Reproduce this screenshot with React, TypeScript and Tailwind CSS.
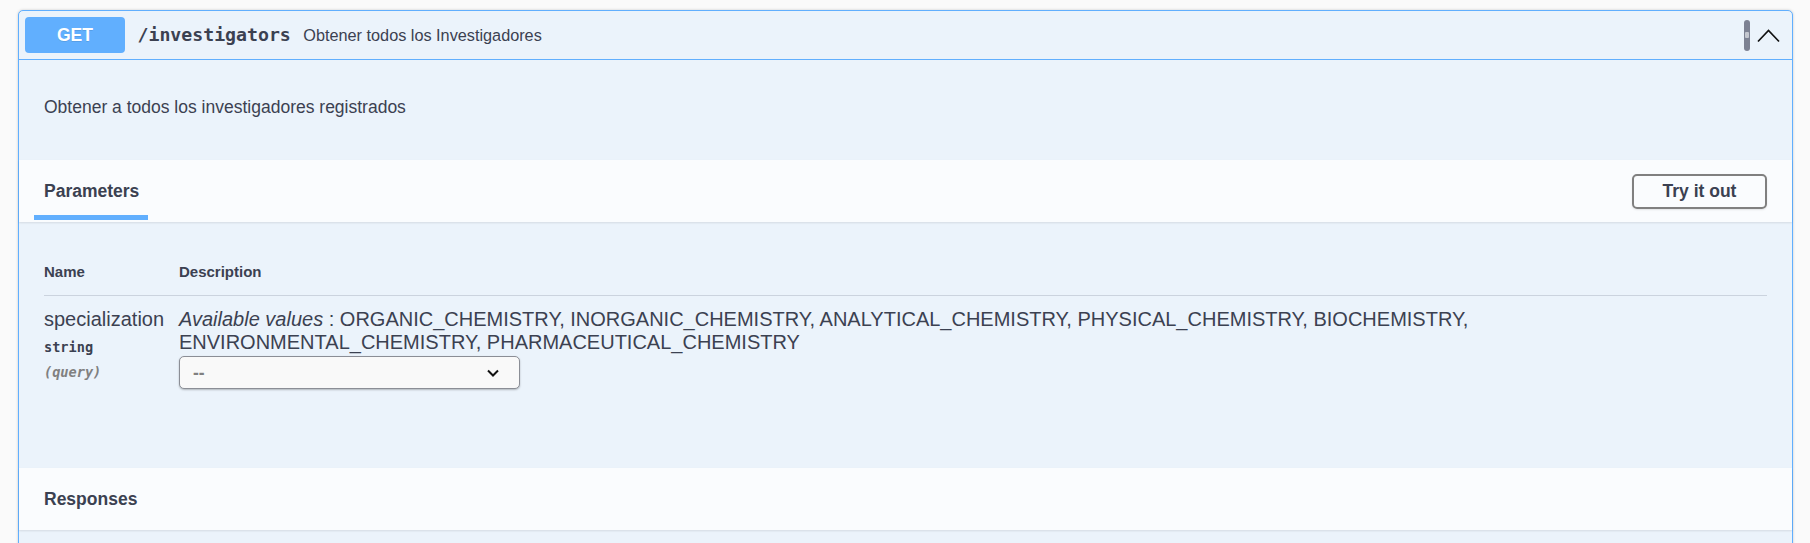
import React from 'react';

const sans = "font-['Liberation_Sans',Arial,sans-serif]";
const mono = "font-['DejaVu_Sans_Mono','Liberation_Mono',monospace]";

function ChevronUp() {
  return (
    <svg width="23" height="14" viewBox="0 0 23 14" className="block">
      <polyline points="1,12.5 11.5,1.5 22,12.5" fill="none" stroke="#111" strokeWidth="1.7" />
    </svg>
  );
}

function ChevronDown() {
  return (
    <svg width="12" height="8" viewBox="0 0 12 8" className="block">
      <polyline points="1,1.5 6,6.5 11,1.5" fill="none" stroke="#111" strokeWidth="2" />
    </svg>
  );
}

export default function App() {
  return (
    <div className={`h-[543px] overflow-hidden bg-[#fafafa] pt-[10px] pl-[18px] pr-[17px] text-[#3b4151] ${sans}`}>
      <div className="rounded-[5px] border border-[#61affe] bg-[#ebf3fb] shadow-[0_0_3px_rgba(0,0,0,0.19)]">
        {/* Summary */}
        <div className="flex h-[49px] items-center border-b border-[#61affe] px-[6px]">
          <div className="flex h-[36px] w-[100px] items-center justify-center rounded-[4px] bg-[#61affe] text-[17.5px] font-bold text-white [text-shadow:0_1px_0_rgba(0,0,0,0.1)]">
            GET
          </div>
          <span className={`px-[12.5px] text-[18.2px] font-bold text-[#3b4151] ${mono}`}>/investigators</span>
          <span className="flex-1 text-[16.25px] text-[#3b4151]">Obtener todos los Investigadores</span>
          <div className="flex h-[31px] w-[6px] items-center justify-center rounded-full bg-[#7d8293]">
            <div className="h-[6px] w-[4px] rounded-[1px] bg-[#c4c7cf]" />
          </div>
          <div className="ml-[7px] mr-[6px] mt-[1px]">
            <ChevronUp />
          </div>
        </div>

        {/* Description */}
        <div className="h-[100px] pl-[25px] pt-[37px] text-[17.5px] leading-[20px]">
          Obtener a todos los investigadores registrados
        </div>

        {/* Parameters header */}
        <div className="flex h-[62px] items-center justify-between bg-[#fafcfe] px-[25px] shadow-[0_1px_2px_rgba(0,0,0,0.1)]">
          <span className="relative text-[17.5px] font-bold leading-[20px]">
            Parameters
            <span className="absolute left-[-10px] top-[34px] h-[5px] w-[114px] bg-[#61affe]" />
          </span>
          <button className="h-[35px] w-[135px] rounded-[5px] border-[2.5px] border-[#808080] bg-transparent text-[17.5px] font-bold text-[#3b4151] shadow-[0_1px_2px_rgba(0,0,0,0.1)]">
            Try it out
          </button>
        </div>

        {/* Parameters table */}
        <div className="px-[25px] pt-[25px]">
          <div className="grid grid-cols-[135px_1fr] border-b border-[#cbd3de] pb-[14px] pt-[16px] text-[15px] font-bold leading-[18px]">
            <div>Name</div>
            <div>Description</div>
          </div>
          <div className="grid grid-cols-[135px_1fr] pt-[12px]">
            <div>
              <div className="text-[20px] leading-[23px]">specialization</div>
              <div className={`mt-[8px] text-[13.6px] font-bold leading-[17px] text-[#3b4151] ${mono}`}>string</div>
              <div className={`mt-[8px] text-[13.6px] font-bold italic leading-[17px] text-[#808080] ${mono}`}>(query)</div>
            </div>
            <div>
              <div className="text-[20px] leading-[23px]">
                <span className="whitespace-nowrap">
                  <i>Available values</i> : ORGANIC_CHEMISTRY, INORGANIC_CHEMISTRY, ANALYTICAL_CHEMISTRY, PHYSICAL_CHEMISTRY, BIOCHEMISTRY,
                </span>
                <br />
                ENVIRONMENTAL_CHEMISTRY, PHARMACEUTICAL_CHEMISTRY
              </div>
              <div className="mt-[2px] flex h-[33px] w-[341px] items-center justify-between rounded-[5px] border border-[#8b8e96] bg-[#f9f9f9] pl-[13px] pr-[20px] shadow-[0_1px_2px_rgba(0,0,0,0.25)]">
                <span className="text-[17.5px] font-bold leading-[20px] text-[#808080]">--</span>
                <ChevronDown />
              </div>
            </div>
          </div>
          <div className="h-[79px]" />
        </div>

        {/* Responses header */}
        <div className="flex h-[62px] items-center bg-[#fafcfe] px-[25px] shadow-[0_1px_2px_rgba(0,0,0,0.1)]">
          <span className="text-[17.5px] font-bold leading-[20px]">Responses</span>
        </div>
        <div className="h-[60px]" />
      </div>
    </div>
  );
}
